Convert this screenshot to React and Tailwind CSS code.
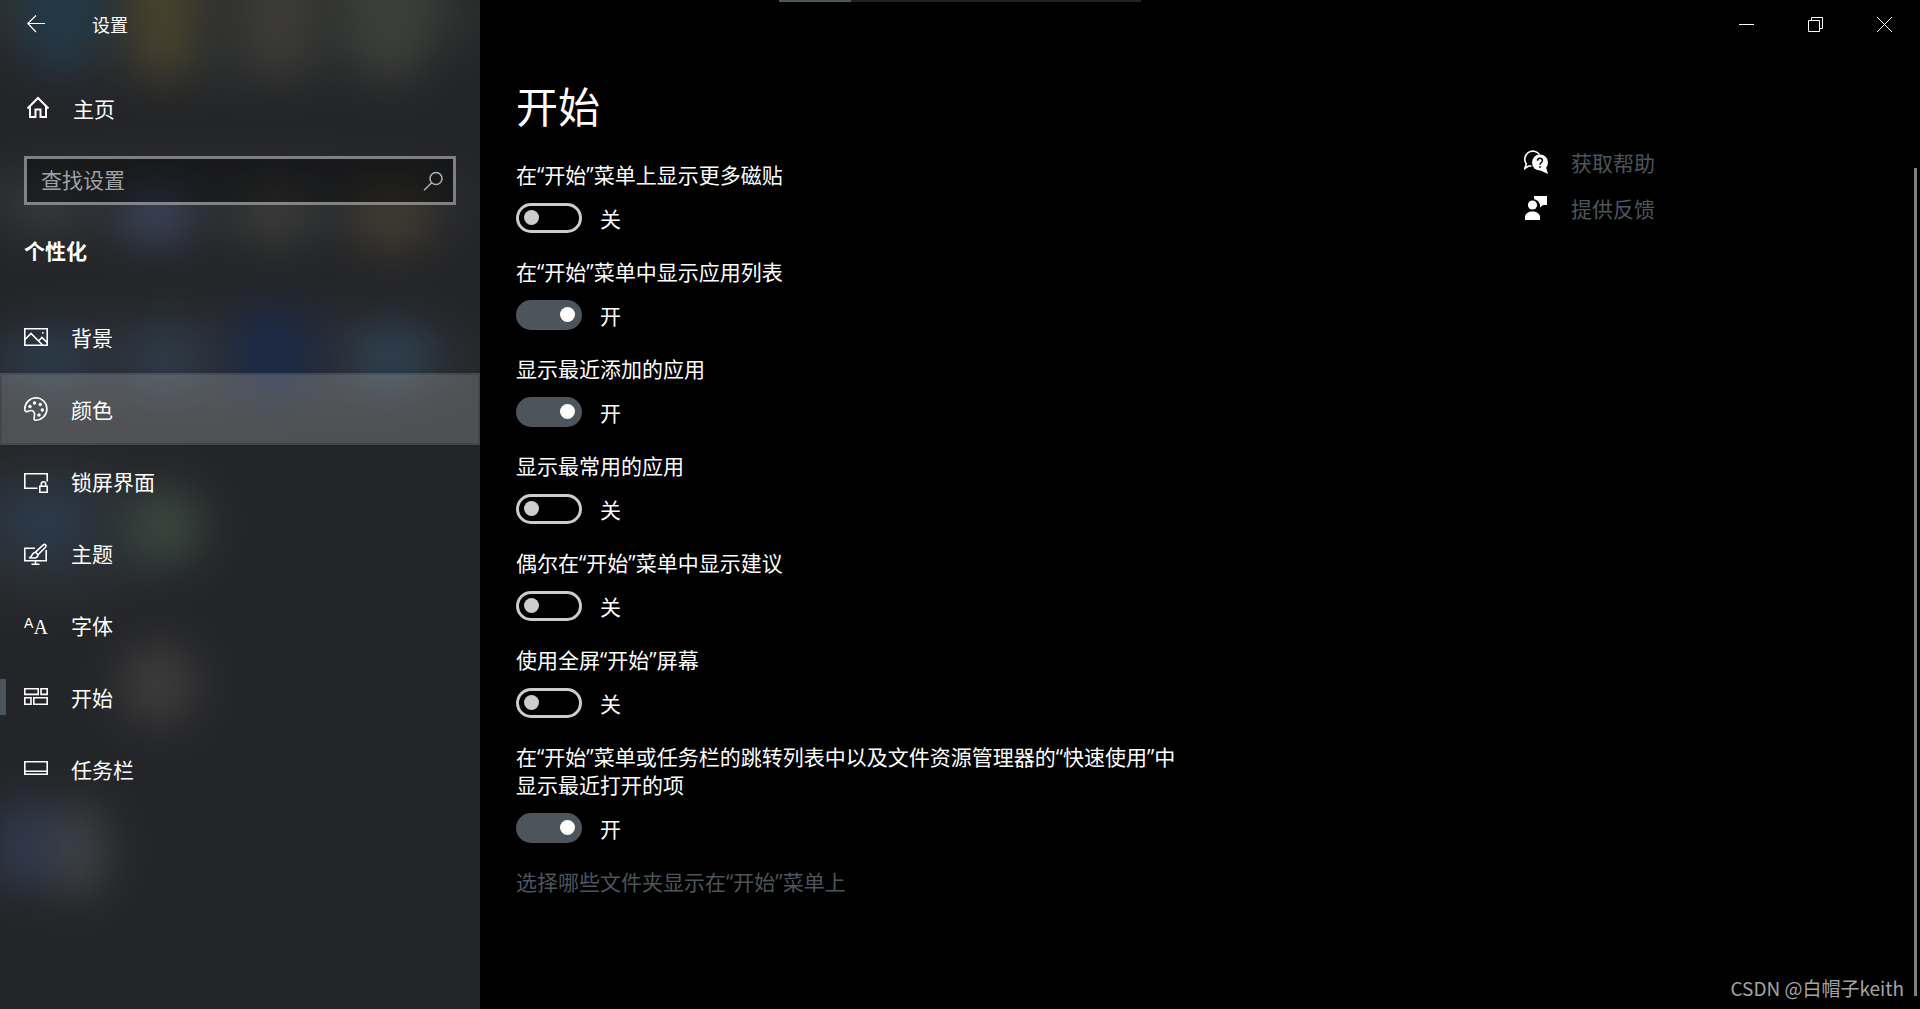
import React, { useState } from 'react';

const NAV = [
  { id: 'background', label: '背景', icon: PictureIcon },
  { id: 'colors', label: '颜色', icon: PaletteIcon },
  { id: 'lock', label: '锁屏界面', icon: LockScreenIcon },
  { id: 'themes', label: '主题', icon: ThemeIcon },
  { id: 'fonts', label: '字体', icon: FontIcon },
  { id: 'start', label: '开始', icon: StartIcon },
  { id: 'taskbar', label: '任务栏', icon: TaskbarIcon },
];

const OPTIONS = [
  { id: 'more-tiles', label: '在“开始”菜单上显示更多磁贴', on: false },
  { id: 'app-list', label: '在“开始”菜单中显示应用列表', on: true },
  { id: 'recent-apps', label: '显示最近添加的应用', on: true },
  { id: 'most-used', label: '显示最常用的应用', on: false },
  { id: 'suggestions', label: '偶尔在“开始”菜单中显示建议', on: false },
  { id: 'full-screen', label: '使用全屏“开始”屏幕', on: false },
  {
    id: 'recent-items',
    label: '在“开始”菜单或任务栏的跳转列表中以及文件资源管理器的“快速使用”中显示最近打开的项',
    on: true,
  },
];

// cx, cy, rx, ry, color
const GLOWS = [
  [230, 10, 260, 70, '#2d302f'],
  [220, 200, 260, 40, '#2b2d30'],
  [220, 360, 260, 50, '#292d32'],
  [50, 530, 130, 70, '#2a2f33'],
  [60, 0, 44, 76, '#233846'],
  [163, 0, 32, 84, '#48422c'],
  [278, 0, 38, 84, '#3b3a36'],
  [390, 0, 46, 84, '#3c3e3a'],
  [45, 205, 42, 34, '#33383b'],
  [155, 215, 36, 32, '#394257'],
  [275, 215, 38, 30, '#3a3b38'],
  [392, 218, 42, 34, '#3f3b2f'],
  [50, 358, 46, 34, '#2b3a48'],
  [165, 358, 42, 34, '#2d3a47'],
  [275, 350, 48, 46, '#1c2a44'],
  [392, 355, 42, 34, '#2e4050'],
  [45, 522, 48, 36, '#2a394a'],
  [165, 526, 40, 40, '#38453e'],
  [158, 684, 40, 42, '#3b3b3a'],
  [75, 850, 34, 48, '#3d4043'],
  [24, 845, 36, 46, '#2f384b'],
];

function Backdrop() {
  return (
    <svg aria-hidden="true" className="absolute inset-0 h-full w-full">
      <defs>
        <filter
          id="soften"
          filterUnits="userSpaceOnUse"
          x="-100"
          y="-100"
          width="680"
          height="1300"
          colorInterpolationFilters="sRGB"
        >
          <feGaussianBlur stdDeviation="20" />
        </filter>
      </defs>
      <g filter="url(#soften)">
        <rect x="-100" y="-100" width="680" height="1300" fill="#242528" />
        {GLOWS.map(([cx, cy, rx, ry, fill]) => (
          <ellipse key={`${cx}-${cy}`} cx={cx} cy={cy} rx={rx} ry={ry} fill={fill} />
        ))}
      </g>
    </svg>
  );
}

function Icon({ children, width = 1.6 }) {
  return (
    <svg
      aria-hidden="true"
      viewBox="0 0 24 24"
      className="h-6 w-6 shrink-0"
      fill="none"
      stroke="currentColor"
      strokeWidth={width}
    >
      {children}
    </svg>
  );
}

function HomeIcon() {
  return (
    <Icon width={2}>
      <path d="M1.5 12.5L12 2l10.5 10.5M4 10.5V21h5.5v-7.5h5V21H20V10.5" />
    </Icon>
  );
}

function PictureIcon() {
  return (
    <Icon>
      <path d="M.8 3.8h22.4v16.4H.8zM1 14.5l6-6L18.5 20M14.5 16l3.5-3.5 5 5" />
      <rect x="18" y="7" width="1.6" height="1.6" fill="currentColor" stroke="none" />
    </Icon>
  );
}

function PaletteIcon() {
  return (
    <Icon>
      <path d="M12 .8a11.2 11.2 0 1 1-.6 22.4c-1.9-.2-1.2-2.6-.9-4.6.4-2.8-.8-4.9-3.2-5.1-1.8-.1-2.7 1.1-4.3 1.1C.9 14.6.8 13.3.8 12A11.2 11.2 0 0 1 12 .8z" />
      <g fill="currentColor" stroke="none">
        <circle cx="6" cy="9.5" r="1.7" />
        <circle cx="10.5" cy="6" r="1.7" />
        <circle cx="16.3" cy="7.5" r="1.7" />
        <circle cx="18.3" cy="13" r="1.7" />
        <circle cx="15" cy="18" r="1.7" />
      </g>
    </Icon>
  );
}

function LockScreenIcon() {
  return (
    <Icon>
      <path d="M13.5 19.2H.8V4.8h22.4v7.7M15.8 17.2h7.4v6h-7.4zM17.3 17v-2a2.2 2.2 0 0 1 4.4 0v2" />
    </Icon>
  );
}

function ThemeIcon() {
  return (
    <Icon>
      <path d="M11 7.2H.8v12.6h21.4V9M11.5 20v3M7.5 23.2h8" />
      <path d="M11.5 11.2L19 4.2c2-1.8 4 .3 2.500 2L14 13.7M11.5 11.2L14 13.7c.2 3-3 3.8-9 3.1 2.5-.6 2.5-1.6 3.5-3.6.7-1.3 1.8-1.9 3-2z" />
    </Icon>
  );
}

function FontIcon() {
  return (
    <span aria-hidden="true" className="flex h-6 w-6 shrink-0 items-start justify-center">
      <span className="font-['Liberation_Sans',sans-serif] text-sm leading-5">A</span>
      <span className="font-['Liberation_Serif',serif] text-xl leading-7">A</span>
    </span>
  );
}

function StartIcon() {
  return (
    <Icon>
      <path d="M.8 3.8h13.4v5.6H.8zM17 3.8h6.2v5.6H17zM.8 12.8H7v6.4H.8zM9.8 12.8h13.4v6.4H9.8z" />
    </Icon>
  );
}

function TaskbarIcon() {
  return (
    <Icon>
      <path d="M.8 4.8h22.4v12.4H.8zM1 14.2h22" />
    </Icon>
  );
}

function HelpIcon() {
  return (
    <svg aria-hidden="true" viewBox="0 0 24 24" className="h-6 w-6 shrink-0">
      <path
        d="M7.5 16H4.5L.8 18.5 2.3 14A7.6 7.6 0 1 1 15.5 4.5"
        fill="none"
        stroke="#fff"
        strokeWidth="1.6"
      />
      <circle cx="16" cy="12.5" r="8" fill="#fff" />
      <path d="M24 24l-8-3.8 6-3z" fill="#fff" />
      <path
        d="M13.5 10.8c0-3.4 5-3.2 5-.3 0 2-2.5 2-2.5 4.3"
        fill="none"
        stroke="#000"
        strokeWidth="1.5"
      />
      <rect x="15.2" y="16.2" width="1.6" height="1.6" fill="#000" />
    </svg>
  );
}

function FeedbackIcon() {
  return (
    <svg aria-hidden="true" viewBox="0 0 24 24" className="h-6 w-6 shrink-0" fill="#fff">
      <path d="M10 0h13v9h-4l-3 2.5V9c-.5-3-3-5.5-6-5.5z" />
      <circle cx="8.5" cy="9" r="5.8" fill="#000" />
      <circle cx="8.5" cy="9" r="4.6" />
      <path d="M1 24v-3c0-7.5 15-7.5 15 0v3z" />
    </svg>
  );
}

function WindowButton({ label, children }) {
  return (
    <button type="button" aria-label={label} className="flex h-12 w-[69px] items-center justify-center">
      <svg
        aria-hidden="true"
        viewBox="0 0 15 15"
        className="h-[15px] w-[15px]"
        fill="none"
        stroke="currentColor"
      >
        {children}
      </svg>
    </button>
  );
}

function Toggle({ option, on, onChange }) {
  return (
    <li>
      <label htmlFor={option.id} className="block">
        {option.label}
      </label>
      <div className="mt-[13px] flex h-[31px] items-center gap-[18px]">
        <input
          id={option.id}
          type="checkbox"
          role="switch"
          checked={on}
          onChange={onChange}
          className="flex h-[30px] w-[66px] shrink-0 appearance-none items-center rounded-full border-3 border-[#ccc] px-[5px] before:h-[15px] before:w-[15px] before:rounded-full before:bg-[#ccc] checked:justify-end checked:border-[#4c555b] checked:bg-[#4c555b] checked:px-1 checked:before:bg-white"
        />
        <span className="pt-0.5">{on ? '开' : '关'}</span>
      </div>
    </li>
  );
}

function Sidebar() {
  return (
    <aside className="relative w-[480px] shrink-0 overflow-hidden bg-[#242528]">
      <Backdrop />
      <div className="relative">
        <div className="flex h-12 items-center">
          <button type="button" aria-label="返回" className="flex h-12 w-[72px] items-center justify-center">
            <svg
              aria-hidden="true"
              viewBox="0 0 18 18"
              className="h-[18px] w-[18px]"
              fill="none"
              stroke="currentColor"
              strokeWidth="1.2"
            >
              <path d="M18 8.5H.8M9 .5L.8 8.5 9 17" />
            </svg>
          </button>
          <span className="pt-0.5 pl-5 text-lg">设置</span>
        </div>

        <a href="#home" className="mt-6 flex h-[72px] items-center gap-[23px] px-[26px]">
          <HomeIcon />
          <span className="pt-0.5">主页</span>
        </a>

        <form className="mx-6 mt-3 flex h-[49px] items-center border-3 border-white/45 bg-black/40">
          <input
            type="text"
            aria-label="查找设置"
            placeholder="查找设置"
            className="min-w-0 flex-1 bg-transparent pb-0.5 pl-[14px] outline-none placeholder:text-[#a0a1a3]"
          />
          <button type="button" aria-label="搜索" className="flex w-10 justify-center text-[#b0b1b3]">
            <svg
              aria-hidden="true"
              viewBox="0 0 20 20"
              className="h-5 w-5"
              fill="none"
              stroke="currentColor"
              strokeWidth="1.5"
            >
              <circle cx="13" cy="7.5" r="6" />
              <path d="M8.7 11.7L1 19.3" />
            </svg>
          </button>
        </form>

        <h2 className="mt-8 px-6 font-bold">个性化</h2>

        <nav className="mt-9">
          {NAV.map(({ id, label, icon: NavIcon }) => (
            <a
              key={id}
              href={`#${id}`}
              aria-current={id === 'start' ? 'page' : undefined}
              className={
                id === 'colors'
                  ? 'flex h-[72px] items-center border-2 border-white/15 bg-white/20 bg-clip-padding pl-[22px]'
                  : 'flex h-[72px] items-center'
              }
            >
              {id !== 'colors' && (
                <span className={id === 'start' ? 'mr-[18px] h-9 w-1.5 bg-[#4c555b]' : 'mr-[18px] w-1.5'} />
              )}
              <NavIcon />
              <span className="pt-0.5 pl-[23px]">{label}</span>
            </a>
          ))}
        </nav>
      </div>
    </aside>
  );
}

export default function App() {
  const [values, setValues] = useState(() => Object.fromEntries(OPTIONS.map((o) => [o.id, o.on])));

  function toggle(id) {
    setValues((v) => ({ ...v, [id]: !v[id] }));
  }

  return (
    <div
      lang="zh-CN"
      className="relative flex min-h-screen bg-black font-['Open_Sans','Noto_Sans_CJK_SC',sans-serif] text-[21px] leading-7 text-white"
    >
      <Sidebar />

      <main className="min-w-0 flex-1 pl-9">
        <div className="flex h-12 justify-end pr-px">
          <WindowButton label="最小化">
            <path d="M0 7.5h15" />
          </WindowButton>
          <WindowButton label="还原">
            <path d="M.5 3.5h11v11H.5zM3.5 3.5v-3h11v11h-3" />
          </WindowButton>
          <WindowButton label="关闭">
            <path d="M0 0l15 15M15 0L0 15" />
          </WindowButton>
        </div>

        <div className="flex pt-[31px]">
          <section className="min-w-0 flex-1">
            <h1 className="text-[42px] leading-14">开始</h1>
            <ul className="mt-[26px] max-w-[680px] space-y-[25px]">
              {OPTIONS.map((option) => (
                <Toggle
                  key={option.id}
                  option={option}
                  on={values[option.id]}
                  onChange={() => toggle(option.id)}
                />
              ))}
            </ul>
            <a href="#folders" className="mt-[25px] inline-block text-[#4c555b]">
              选择哪些文件夹显示在“开始”菜单上
            </a>
          </section>

          <div className="w-[396px] shrink-0 pt-[60px] text-[#4c555b]">
            <a href="#help" className="flex h-[46px] items-center gap-[23px]">
              <HelpIcon />
              <span className="pt-0.5">获取帮助</span>
            </a>
            <a href="#feedback" className="flex h-[46px] items-center gap-[23px]">
              <FeedbackIcon />
              <span className="pt-0.5">提供反馈</span>
            </a>
          </div>
        </div>
      </main>

      {/* loading strip on the top edge */}
      <div className="absolute top-0 left-1/2 h-0.5 w-[362px] -translate-x-1/2 bg-[#222]">
        <div className="h-full w-1/5 bg-[#4c5a60]" />
      </div>

      <div className="absolute top-[168px] right-[3px] bottom-[13px] w-[3px] bg-[#7f7f7f]" />

      <p className="absolute right-4 bottom-[7px] font-['Noto_Sans_CJK_SC',sans-serif] text-[19px] text-[#a3a3a3]">
        CSDN @白帽子keith
      </p>
    </div>
  );
}
